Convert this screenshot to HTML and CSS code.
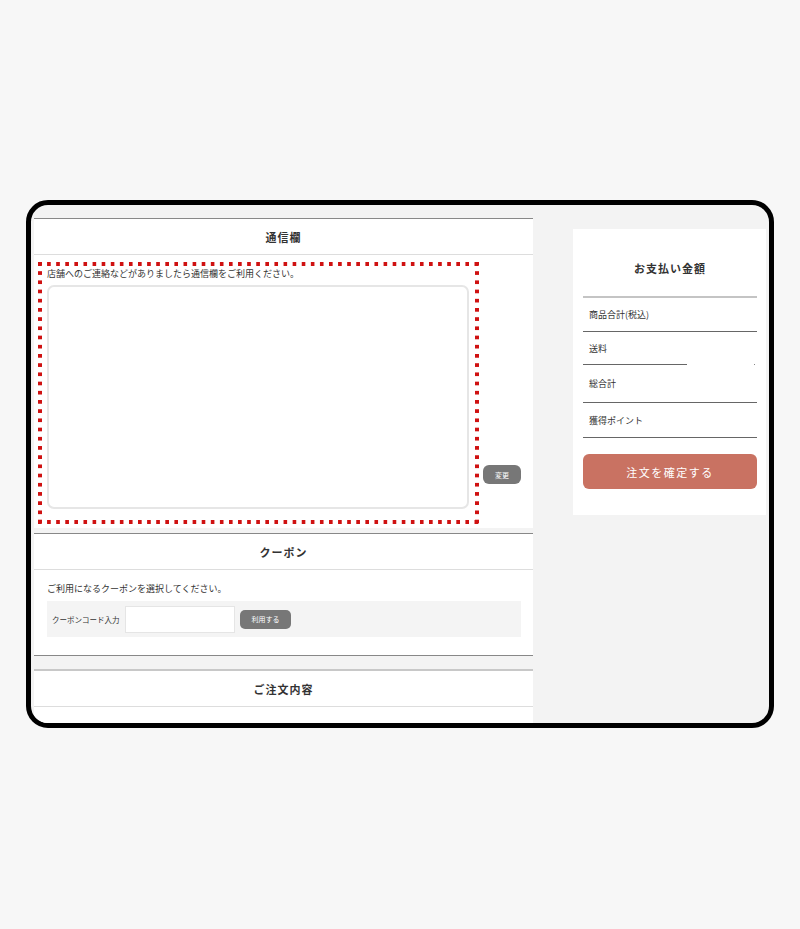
FILE: index.html
```html
<!DOCTYPE html>
<html lang="ja">
<head>
<meta charset="utf-8">
<link rel="stylesheet" href="styles.css">
</head>
<body>
<div class="frame">
  <div class="main">
    <section class="sec sec-msg">
      <h2 class="sec-head">通信欄</h2>
      <div class="msg-body">
        <div class="dotted">
          <p class="note">店舗へのご連絡などがありましたら通信欄をご利用ください。</p>
          <textarea class="msg-area"></textarea>
        </div>
        <button class="btn-gray btn-change">変更</button>
      </div>
    </section>

    <section class="sec sec-coupon">
      <h2 class="sec-head">クーポン</h2>
      <div class="coupon-body">
        <p class="note">ご利用になるクーポンを選択してください。</p>
        <div class="coupon-box">
          <span class="coupon-label">クーポンコード入力</span>
          <input class="coupon-input" type="text">
          <button class="btn-gray btn-use">利用する</button>
        </div>
      </div>
    </section>

    <section class="sec sec-order">
      <h2 class="sec-head">ご注文内容</h2>
      <div class="order-body"></div>
    </section>
  </div>

  <aside class="pay">
    <h2 class="pay-head">お支払い金額</h2>
    <div class="pay-row r1">商品合計(税込)</div>
    <div class="pay-row r2">送料</div>
    <div class="partial-line"><span class="pl-line"></span><span class="pl-dot"></span></div>
    <div class="pay-row r3">総合計</div>
    <div class="pay-row r4">獲得ポイント</div>
    <button class="btn-confirm">注文を確定する</button>
  </aside>
</div>
</body>
</html>
```

FILE: styles.css
```css
* { box-sizing: border-box; }
html, body { margin: 0; padding: 0; }
body {
  background: #f7f7f7;
  font-family: "Noto Sans CJK JP", "Noto Sans", sans-serif;
  color: #333;
  padding: 200px 0 0 26px;
  height: 929px;
}
.frame {
  width: 748px;
  height: 528px;
  border: 5px solid #000;
  border-radius: 22px;
  background: #f3f3f3;
  overflow: hidden;
  display: flex;
  align-items: flex-start;
  padding: 13px 3px 0 3px;
}
.main {
  width: 499px;
  flex: none;
}
.sec {
  background: #fff;
  border-top: 1px solid #888;
}
.sec-head {
  margin: 0;
  height: 36px;
  border-bottom: 1px solid #ddd;
  display: flex;
  align-items: center;
  justify-content: center;
  font-size: 11px;
  font-weight: bold;
  letter-spacing: 1px;
  color: #333;
}
.sec-msg { margin-bottom: 5px; }
.msg-body {
  display: flex;
  align-items: flex-start;
  padding: 7px 0 4px 4px;
}
.dotted {
  width: 441px;
  height: 262px;
  padding: 6px 9px 0 9px;
  background:
    linear-gradient(to right, #cf1111 4px, transparent 4px) left top / 9.104px 4px repeat-x,
    linear-gradient(to right, #cf1111 4px, transparent 4px) left bottom / 9.104px 4px repeat-x,
    linear-gradient(to bottom, #cf1111 4px, transparent 4px) left top / 4px 9.214px repeat-y,
    linear-gradient(to bottom, #cf1111 4px, transparent 4px) right top / 4px 9.214px repeat-y;
}
.note {
  margin: 0;
  font-size: 9px;
  line-height: 12px;
  color: #333;
  white-space: nowrap;
}
.msg-area {
  display: block;
  margin-top: 5px;
  width: 422px;
  height: 224px;
  border: 2px solid #e6e6e6;
  border-radius: 7px;
  background: #fff;
  resize: none;
  outline: none;
}
.btn-gray {
  border: none;
  background: #777;
  color: #fff;
  font-family: inherit;
  padding: 0;
  cursor: pointer;
}
.btn-change {
  margin: 203px 0 0 4px;
  width: 38px;
  height: 19px;
  border-radius: 6px;
  font-size: 7px;
}
.coupon-body {
  padding: 13px 13px 18px 13px;
}
.coupon-box {
  margin-top: 6px;
  width: 474px;
  height: 36px;
  background: #f4f4f4;
  display: flex;
  align-items: center;
  padding-left: 5px;
}
.coupon-label {
  font-size: 7.5px;
  color: #333;
  width: 73px;
  white-space: nowrap;
}
.coupon-input {
  width: 110px;
  height: 27px;
  border: 1px solid #e5e5e5;
  background: #fff;
  outline: none;
}
.btn-use {
  margin-left: 5px;
  width: 51px;
  height: 19px;
  border-radius: 5px;
  font-size: 7px;
}
.sec-coupon { border-bottom: 1px solid #888; margin-bottom: 13px; }
.sec-order { border-top: 2px solid #c8c8c8; }
.order-body { height: 40px; }

.pay {
  width: 193px;
  margin: 11px 0 0 40px;
  background: #fff;
  padding: 0 9px 26px 10px;
}
.pay-head {
  margin: 0;
  padding: 31px 0 20px;
  line-height: 16px;
  text-align: center;
  font-size: 11px;
  font-weight: bold;
  letter-spacing: 1px;
  border-bottom: 2px solid #c4c4c4;
}
.pay-row {
  display: flex;
  align-items: center;
  padding-left: 6px;
  font-size: 9px;
  color: #333;
  border-bottom: 1px solid #666;
}
.r1 { height: 34px; }
.r2 { height: 32px; border-bottom: none; }
.r3 { height: 38px; }
.r4 { height: 35px; }
.partial-line {
  display: flex;
  justify-content: space-between;
  height: 1px;
}
.pl-line { width: 104px; height: 1px; background: #666; }
.pl-dot { width: 1px; height: 1px; background: #888; margin-right: 2px; }
.btn-confirm {
  display: block;
  margin-top: 16px;
  width: 174px;
  height: 35px;
  border: none;
  border-radius: 6px;
  background: #c97262;
  color: #fff;
  font-family: inherit;
  font-size: 11px;
  letter-spacing: 1.5px;
}
```
